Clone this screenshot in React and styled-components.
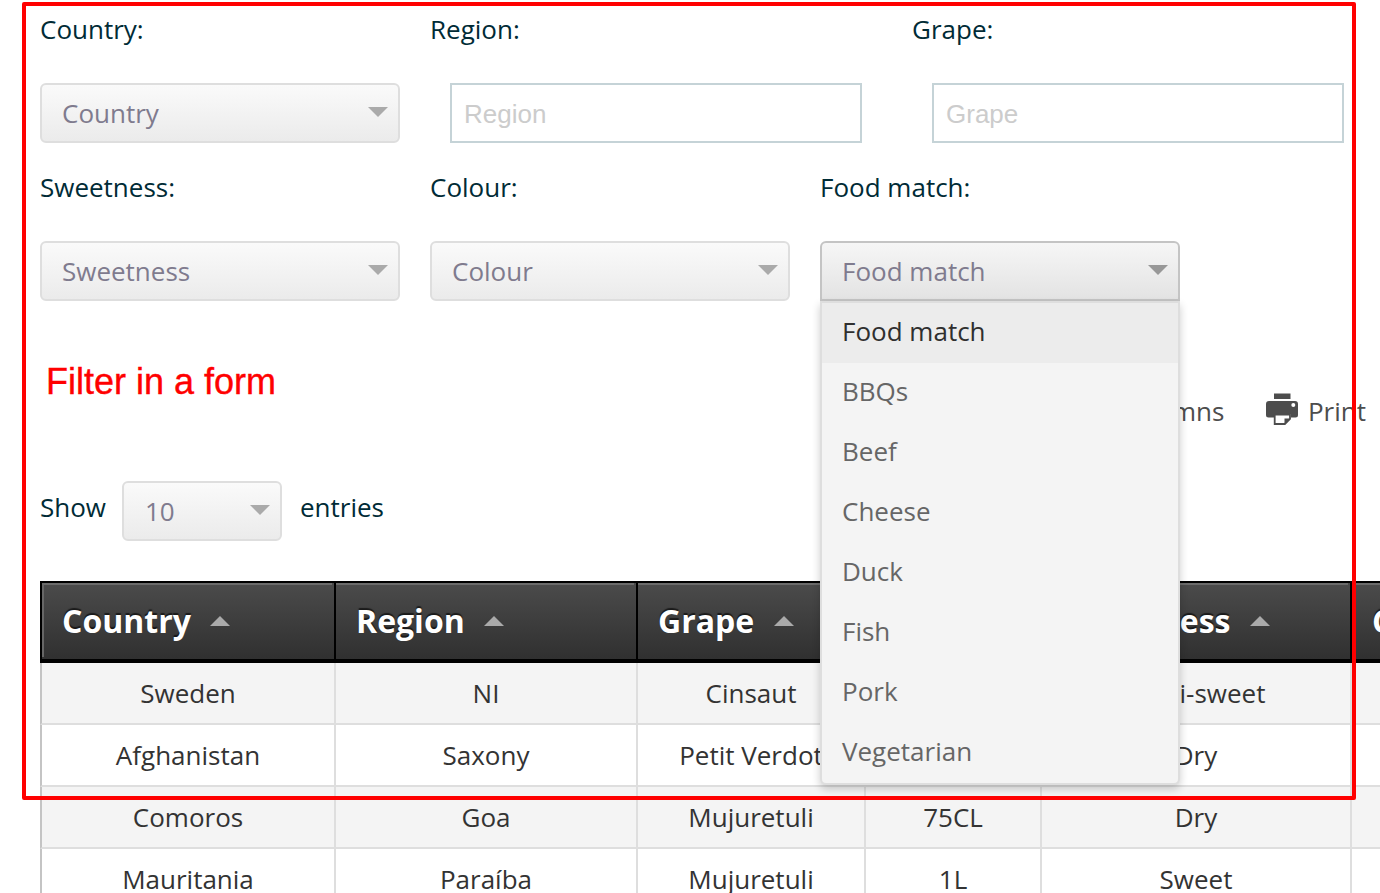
import React from "react";
import styled, { createGlobalStyle, css } from "styled-components";

const GlobalStyle = createGlobalStyle`
  *, *::before, *::after { box-sizing: border-box; }
  body {
    margin: 0;
    background: #fff;
    color: #002b36;
    font-family: "Open Sans", "Noto Sans", sans-serif;
    font-size: 26px;
    line-height: 36px;
    overflow: hidden;
  }
`;

const Page = styled.div`
  position: relative;
  width: 1380px;
  height: 893px;
  padding: 11px 0 0 40px;
  overflow: hidden;
`;

const FilterForm = styled.form`
  display: flex;
  flex-direction: column;
  height: 290px;
`;

const FilterRow = styled.div`
  display: flex;
  height: 158px;
  flex: none;
`;

const Field = styled.div`
  flex: none;
  width: ${(p) => (p.$wide ? 482 : 390)}px;
`;

const Label = styled.label`
  display: block;
  height: 72px;
`;

const SelectWrap = styled.div`
  position: relative;
  width: ${(p) => p.$width || 360}px;
`;

const SelectButton = styled.div`
  display: flex;
  align-items: center;
  justify-content: space-between;
  height: 60px;
  padding: 0 10px 0 ${(p) => p.$indent || 20}px;
  border: 2px solid ${(p) => (p.$open ? "#c4c4c4" : "#dedede")};
  border-radius: ${(p) => (p.$open ? "6px 6px 0 0" : "6px")};
  background: ${(p) =>
    p.$open
      ? "linear-gradient(#f6f6f6, #e3e3e3)"
      : "linear-gradient(#fafafa, #ebebeb)"};
  color: #7f7b8e;
  line-height: 56px;
`;

const arrow = css`
  flex: none;
  width: 0;
  height: 0;
  border: 10px solid transparent;
`;

const DownArrow = styled.span`
  ${arrow}
  border-bottom: 0;
  border-top-color: ${(p) => (p.$open ? "#989898" : "#aaa")};
  margin-top: -3px;
`;

const UpArrow = styled.span`
  ${arrow}
  border-top: 0;
  border-bottom-color: #aaa;
`;

const Menu = styled.ul`
  position: absolute;
  z-index: 2;
  top: 60px;
  left: 0;
  width: 100%;
  margin: 0;
  padding: 0;
  list-style: none;
  border: 2px solid #dedede;
  border-radius: 0 0 6px 6px;
  background: #f4f4f4;
  box-shadow: 0 4px 8px rgba(0, 0, 0, 0.2);
`;

const MenuItem = styled.li`
  height: 60px;
  padding: 0 20px;
  line-height: 56px;
  color: ${(p) => (p.$active ? "#2f2f2f" : "#666")};
  background: ${(p) => (p.$active ? "#ececec" : "transparent")};
`;

const TextInput = styled.input`
  display: block;
  width: 412px;
  height: 60px;
  margin: 0 0 0 20px;
  padding: 2px 12px 0;
  border: 2px solid #c5d3d7;
  border-radius: 0;
  background: #fff;
  font: 26px "Liberation Sans", Arial, sans-serif;
  &::placeholder { color: #ccc; opacity: 1; }
`;

const Toolbar = styled.div`
  display: flex;
  align-items: center;
  justify-content: flex-end;
  gap: 42px;
  height: 36px;
  margin-top: 92px;
  padding-right: 14px;
  color: #4d4d4d;
`;

const Tool = styled.div`
  display: flex;
  align-items: center;
  gap: 9.500px;
`;

const PrinterIcon = styled.svg`
  display: block;
  width: 32px;
  height: 32px;
  margin-top: -5px;
`;

const LengthRow = styled.div`
  display: flex;
  height: 60px;
  margin-top: 52px;
`;

const LengthText = styled.span`
  padding-top: 8px;
`;

const LengthSelect = styled.div`
  width: 160px;
  margin: 0 18px 0 16px;
`;

const DataTable = styled.table`
  width: 1612px;
  margin-top: 40px;
  table-layout: fixed;
  border-collapse: separate;
  border-spacing: 0;
  color: #333;
`;

const HeadCell = styled.th`
  height: 82px;
  padding: 0 0 0 20px;
  border: solid #000;
  border-width: 2px 2px 4px 0;
  background:
    linear-gradient(#6b6b6b, #6b6b6b) 0 0 / calc(100% - 2px) 2px no-repeat padding-box,
    linear-gradient(#4b4b4b, #303030) padding-box;
  color: #fff;
  font-size: 32px;
  line-height: 44px;
  text-align: left;
  text-shadow: 0 -2px 1px rgba(0, 0, 0, 0.6);
  &:first-child {
    border-left-width: 2px;
    background:
      linear-gradient(#6b6b6b, #6b6b6b) 0 0 / calc(100% - 2px) 2px no-repeat padding-box,
      linear-gradient(#666, #666) 0 0 / 2px calc(100% - 2px) no-repeat padding-box,
      linear-gradient(#4b4b4b, #303030) padding-box;
  }
`;

const HeadContent = styled.div`
  display: flex;
  align-items: center;
  gap: 19.500px;
`;

const Row = styled.tr`
  background: #fff;
  &:nth-child(odd) { background: #f4f4f4; }
`;

const Cell = styled.td`
  height: 62px;
  padding: 0;
  border: solid #dedede;
  border-width: 0 2px 2px 0;
  text-align: center;
  &:first-child { border-left: 2px solid #c4c4c4; }
`;

const HighlightFrame = styled.div`
  position: absolute;
  z-index: 3;
  left: 22px;
  top: 2px;
  width: 1334px;
  height: 798px;
  border: 4px solid #f00;
  border-radius: 2px;
  pointer-events: none;
`;

const Annotation = styled.div`
  position: absolute;
  z-index: 3;
  left: 46px;
  top: 361px;
  color: #f00;
  font: 36px/41px "Liberation Sans", Arial, sans-serif;
  -webkit-text-stroke: 0.4px #f00;
  white-space: nowrap;
`;

const foods = ["Food match", "BBQs", "Beef", "Cheese", "Duck", "Fish", "Pork", "Vegetarian"];

const columns = [
  { name: "Country", width: 296 },
  { name: "Region", width: 302 },
  { name: "Grape", width: 228 },
  { name: "", width: 176 },
  { name: "Sweetness", width: 310 },
  { name: "Colour", width: 300 },
];

const wines = [
  ["Sweden", "NI", "Cinsaut", "", "Semi-sweet", ""],
  ["Afghanistan", "Saxony", "Petit Verdot", "", "Dry", ""],
  ["Comoros", "Goa", "Mujuretuli", "75CL", "Dry", ""],
  ["Mauritania", "Paraíba", "Mujuretuli", "1L", "Sweet", ""],
];

function Select({ value, options, width, indent }) {
  const open = Boolean(options);
  return (
    <SelectWrap $width={width}>
      <SelectButton $open={open} $indent={indent}>
        <span>{value}</span>
        <DownArrow $open={open} />
      </SelectButton>
      {open && (
        <Menu>
          {options.map((option) => (
            <MenuItem key={option} $active={option === value}>{option}</MenuItem>
          ))}
        </Menu>
      )}
    </SelectWrap>
  );
}

function SelectField({ name, options }) {
  return (
    <Field>
      <Label>{name}:</Label>
      <Select value={name} options={options} />
    </Field>
  );
}

function InputField({ name }) {
  return (
    <Field $wide>
      <Label>{name}:</Label>
      <TextInput placeholder={name} />
    </Field>
  );
}

export default function App() {
  return (
    <>
      <GlobalStyle />
      <Page>
        <FilterForm>
          <FilterRow>
            <SelectField name="Country" />
            <InputField name="Region" />
            <InputField name="Grape" />
          </FilterRow>
          <FilterRow>
            <SelectField name="Sweetness" />
            <SelectField name="Colour" />
            <SelectField name="Food match" options={foods} />
          </FilterRow>
        </FilterForm>

        <Toolbar>
          <Tool>Columns</Tool>
          <Tool>
            <PrinterIcon viewBox="0 0 32 32" fill="#4d4d4d">
              <path d="M8 0.500h16.500V6H8z" />
              <path d="M3 8h26a3 3 0 0 1 3 3v11a2.500 2.500 0 0 1-2.500 2.500H25V21H8v3.500H2.500A2.500 2.500 0 0 1 0 22V11a3 3 0 0 1 3-3z" />
              <circle cx="27.300" cy="12" r="2" fill="#fff" />
              <path d="M8.700 21.500H24v4.300L18.800 31H8.700z" fill="#fff" stroke="#4d4d4d" strokeWidth="1.800" />
              <path d="M24.500 25.500L18.500 32v-6.500z" />
            </PrinterIcon>
            Print
          </Tool>
        </Toolbar>

        <LengthRow>
          <LengthText>Show</LengthText>
          <LengthSelect>
            <Select value="10" width={160} indent={21} />
          </LengthSelect>
          <LengthText>entries</LengthText>
        </LengthRow>

        <DataTable>
          <colgroup>
            {columns.map((c, i) => <col key={i} width={c.width} />)}
          </colgroup>
          <thead>
            <tr>
              {columns.map((c, i) => (
                <HeadCell key={i}>
                  {c.name && <HeadContent>{c.name}<UpArrow /></HeadContent>}
                </HeadCell>
              ))}
            </tr>
          </thead>
          <tbody>
            {wines.map((wine, r) => (
              <Row key={r}>
                {wine.map((value, i) => <Cell key={i}>{value}</Cell>)}
              </Row>
            ))}
          </tbody>
        </DataTable>

        <Annotation>Filter in a form</Annotation>
        <HighlightFrame />
      </Page>
    </>
  );
}
